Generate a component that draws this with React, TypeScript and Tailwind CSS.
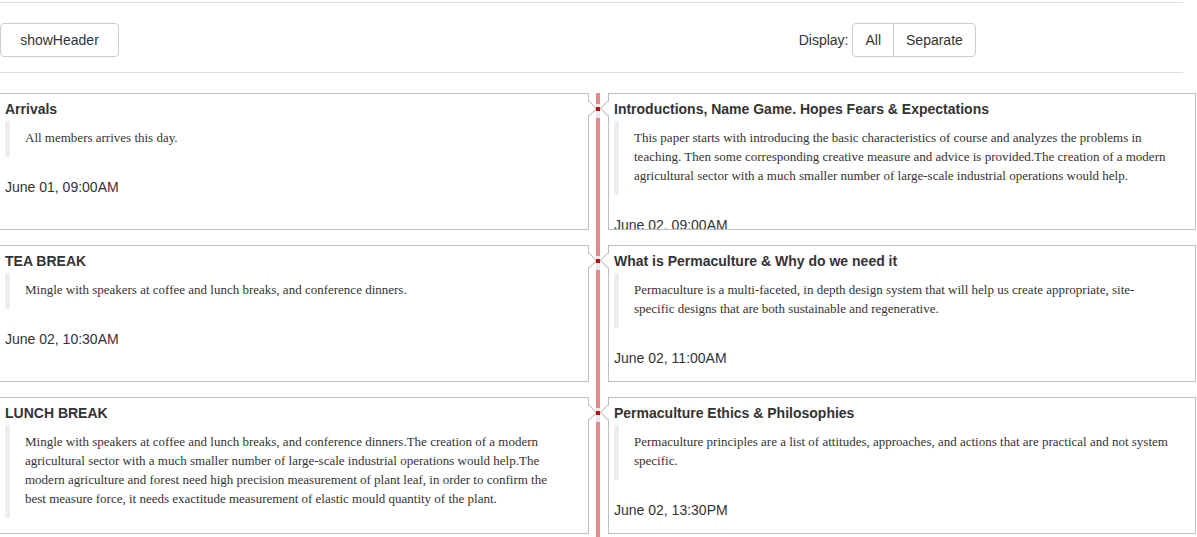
import React from "react";

// Schedule timeline: header toolbar, then two columns of event cards
// joined by a centre rule with a marker per row.

type Item = { title: string; body: string; when: string; tight?: boolean };

const left: Item[] = [
  { title: "Arrivals", body: "All members arrives this day.", when: "June 01, 09:00AM" },
  {
    title: "TEA BREAK",
    body: "Mingle with speakers at coffee and lunch breaks, and conference dinners.",
    when: "June 02, 10:30AM",
  },
  {
    title: "LUNCH BREAK",
    body:
      "Mingle with speakers at coffee and lunch breaks, and conference dinners.The creation of a modern agricultural sector with a much smaller number of large-scale industrial operations would help.The modern agriculture and forest need high precision measurement of plant leaf, in order to confirm the best measure force, it needs exactitude measurement of elastic mould quantity of the plant.",
    when: "June 02, 12:00PM",
  },
];

const right: Item[] = [
  {
    title: "Introductions, Name Game. Hopes Fears & Expectations",
    body:
      "This paper starts with introducing the basic characteristics of course and analyzes the problems in teaching. Then some corresponding creative measure and advice is provided.The creation of a modern agricultural sector with a much smaller number of large-scale industrial operations would help.",
    when: "June 02, 09:00AM",
  },
  {
    title: "What is Permaculture & Why do we need it",
    body:
      "Permaculture is a multi-faceted, in depth design system that will help us create appropriate, site-specific designs that are both sustainable and regenerative.",
    when: "June 02, 11:00AM",
    tight: true,
  },
  {
    title: "Permaculture Ethics & Philosophies",
    body:
      "Permaculture principles are a list of attitudes, approaches, and actions that are practical and not system specific.",
    when: "June 02, 13:30PM",
  },
];

function Card({ item, side }: { item: Item; side: "left" | "right" }) {
  return (
    <div className="relative">
      <div className="h-[137px] overflow-hidden border border-[#babfc9] bg-white px-[5px] pt-[5px]">
        <h3 className="text-[14px] font-bold leading-[20px] text-[#333]">{item.title}</h3>
        <blockquote
          className={
            "mt-[2px] border-l-[5px] border-[#eeeeee] pb-[10px] pl-[15px] pt-[7px] font-['Liberation_Serif',serif] text-[13px] leading-[19px] text-[#333] " +
            (item.tight ? "pr-[23px]" : "pr-[19px]")
          }
        >
          {item.body}
        </blockquote>
        <p className="mt-[20px] text-[14px] leading-[20px] text-[#333]">{item.when}</p>
      </div>
      {side === "left" ? (
        <span className="absolute right-[-6px] top-[10px] h-[11px] w-[11px] rotate-45 border-r border-t border-[#babfc9] bg-white" />
      ) : (
        <span className="absolute left-[-6px] top-[10px] h-[11px] w-[11px] rotate-45 border-b border-l border-[#babfc9] bg-white" />
      )}
    </div>
  );
}

export default function App() {
  return (
    <div className="min-h-screen bg-white font-['Liberation_Sans',Arial,sans-serif] text-[#333]">
      <div className="w-[1183px] pt-[2px]">
        <div className="border-t border-[#dddddd]" />
        <div className="grid grid-cols-2 items-center pb-[15px] pt-[20px]">
          <div>
            <button className="h-[34px] w-[119px] rounded-[4px] border border-[#cccccc] bg-white text-[14px] leading-[20px] text-[#333]">
              showHeader
            </button>
          </div>
          <div className="flex items-center justify-center">
            <span className="mr-[4px] text-[14px] leading-[20px]">Display:</span>
            <div className="flex">
              <button className="h-[34px] rounded-l-[4px] border border-[#cccccc] bg-white px-[12px] text-[14px] leading-[20px] text-[#333]">
                All
              </button>
              <button className="-ml-px h-[34px] rounded-r-[4px] border border-[#cccccc] bg-white px-[12px] text-[14px] leading-[20px] text-[#333]">
                Separate
              </button>
            </div>
          </div>
        </div>
        <div className="border-t border-[#dddddd]" />
      </div>

      <div className="mt-[20px] flex">
        <div className="ml-[-1px] flex w-[590px] flex-col gap-[15px] pb-[4px]">
          {left.map((it) => (
            <Card key={it.title} item={it} side="left" />
          ))}
        </div>
        <div className="relative z-10 flex w-[19px]">
          <div className="ml-[7px] w-[4px] bg-[#e28b8b]" />
          {[11, 163, 315].map((t) => (
            <span
              key={t}
              className="absolute left-[7px] h-[14px] w-[4px] bg-[#e4e9f0] pt-[3px]"
              style={{ top: t }}
            >
              <span className="block h-[4px] w-[4px] bg-[#cc0000]" />
            </span>
          ))}
        </div>
        <div className="flex w-[588px] flex-col gap-[15px]">
          {right.map((it) => (
            <Card key={it.title} item={it} side="right" />
          ))}
        </div>
      </div>
    </div>
  );
}
